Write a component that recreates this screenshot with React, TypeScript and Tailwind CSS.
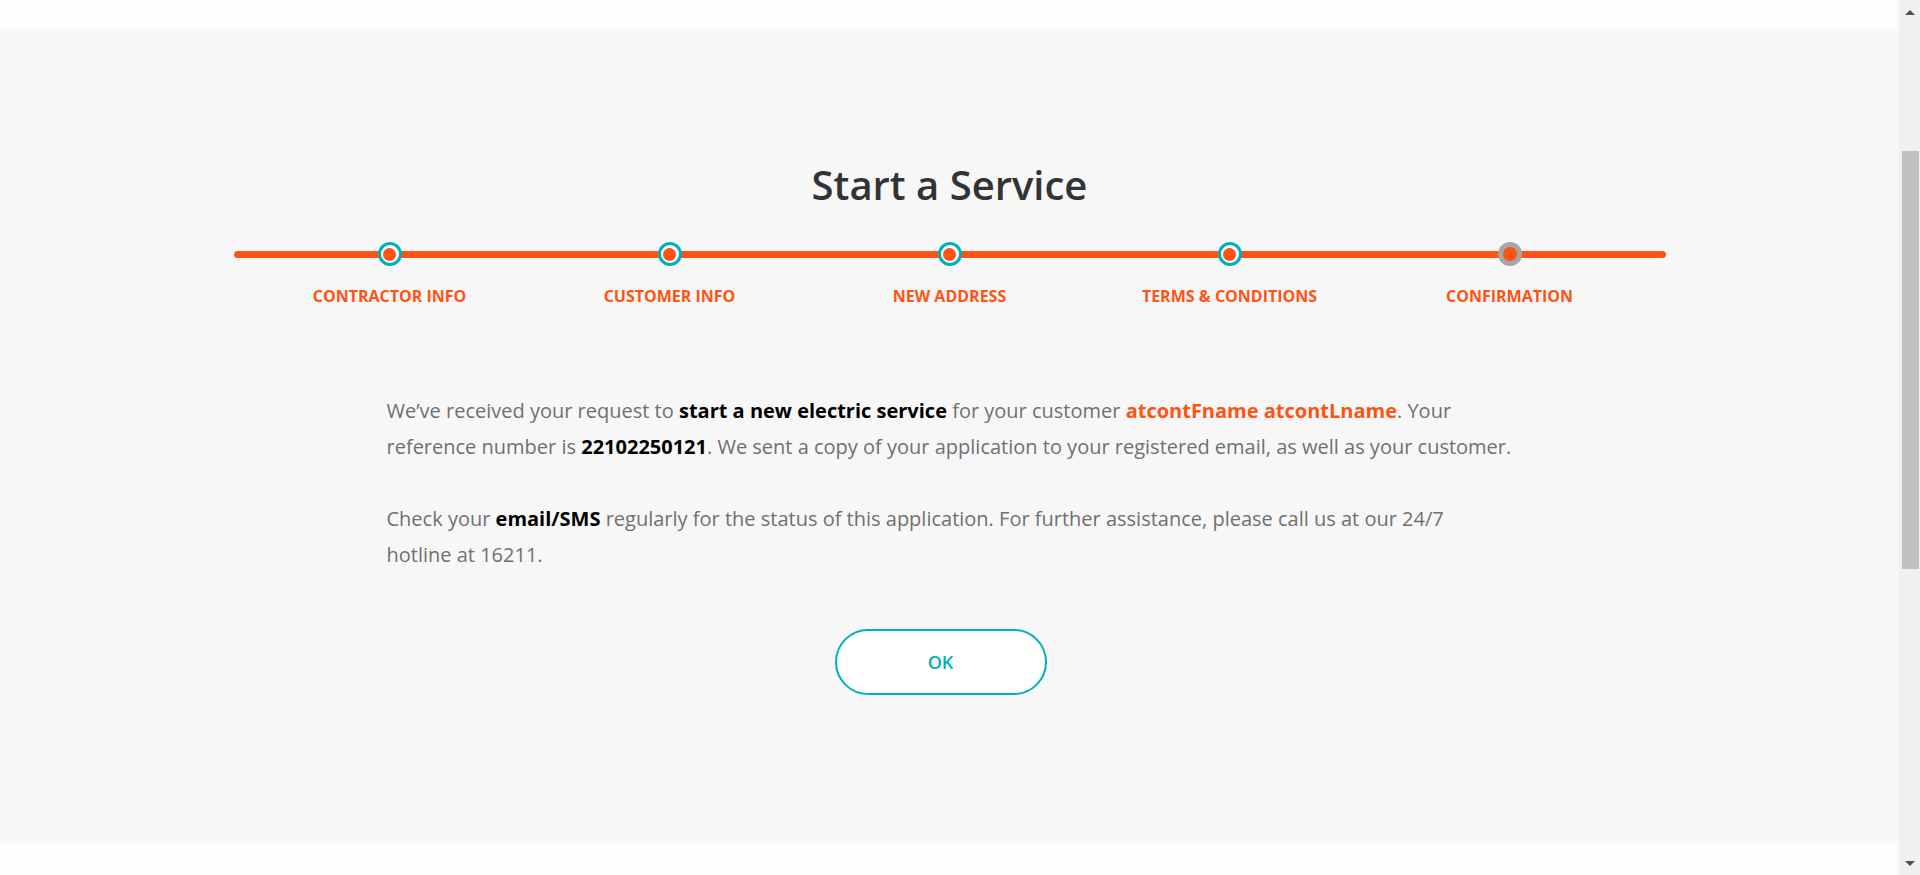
import React from "react";

const steps = [
    { label: "CONTRACTOR INFO", done: true },
    { label: "CUSTOMER INFO", done: true },
    { label: "NEW ADDRESS", done: true },
    { label: "TERMS & CONDITIONS", done: true },
    { label: "CONFIRMATION", done: false },
];

function StepDot({ done }: { done: boolean }) {
    if (done) {
        return (
            <div className="w-[24px] h-[24px] rounded-full border-[3px] border-[#00b1b9] bg-white flex items-center justify-center">
                <div className="w-[13px] h-[13px] rounded-full bg-[#ff5314]" />
            </div>
        );
    }
    return (
        <div className="w-[24px] h-[24px] rounded-full bg-[#a6a6a6] flex items-center justify-center">
            <div className="w-[14px] h-[14px] rounded-full bg-[#ff5314]" />
        </div>
    );
}

function Stepper() {
    return (
        <div className="relative w-[1432px] mx-auto">
            <div className="absolute left-0 right-0 top-[9px] h-[7px] rounded-full bg-[#ff5314]" />
            <div className="relative flex justify-center">
                {steps.map((s) => (
                    <div key={s.label} className="w-[280px] flex flex-col items-center">
                        <StepDot done={s.done} />
                        <div className="mt-[20px] text-[16px] leading-[20px] font-bold text-[#ff5314] whitespace-nowrap">
                            {s.label}
                        </div>
                    </div>
                ))}
            </div>
        </div>
    );
}

function Scrollbar() {
    return (
        <div className="w-[21px] h-[875px] bg-[#f0f0f0] flex flex-col items-center">
            <div className="h-[24px] flex items-center justify-center pl-[1px]">
                <div className="w-0 h-0 border-l-[5px] border-r-[5px] border-b-[5px] border-l-transparent border-r-transparent border-b-[#505050]" />
            </div>
            <div className="mt-[127px] w-[17px] h-[418px] bg-[#c1c1c1] ml-[2px]" />
            <div className="flex-1" />
            <div className="h-[24px] flex items-center justify-center pl-[1px]">
                <div className="w-0 h-0 border-l-[5px] border-r-[5px] border-t-[5px] border-l-transparent border-r-transparent border-t-[#505050]" />
            </div>
        </div>
    );
}

export default function App() {
    return (
        <div className="flex w-[1920px] h-[875px] overflow-hidden" style={{ fontFamily: '"Open Sans", "Noto Sans", sans-serif' }}>
            <div className="flex-1 flex flex-col">
                <div className="h-[31px] bg-[#fdfdfd]" />
                <div className="h-[810px] bg-[#f7f7f7] pt-[130px]">
                    <h1 className="text-center text-[40px] leading-[48px] font-semibold text-[#333333]">
                        Start a Service
                    </h1>
                    <div className="mt-[33px]">
                        <Stepper />
                    </div>
                    <div className="w-[1126px] mx-auto mt-[87px] text-[20px] leading-[36px] text-[#707070]">
                        <p>
                            We’ve received your request to <b className="font-bold text-black">start a new electric service</b> for
                            your customer <b className="font-bold text-[#ff5314]">atcontFname atcontLname</b>. Your reference number
                            is <b className="font-bold text-black">22102250121</b>. We sent a copy of your application to your
                            registered email, as well as your customer.
                        </p>
                        <p className="mt-[36px]">
                            Check your <b className="font-bold text-black">email/SMS</b> regularly for the status of this
                            application. For further assistance, please call us at our 24/7 hotline at 16211.
                        </p>
                    </div>
                    <div className="flex justify-center pr-[18px] mt-[56px]">
                        <button className="w-[212px] h-[66px] rounded-full border-2 border-[#00b1b9] bg-white text-[#00b1b9] text-[18px] font-semibold">
                            OK
                        </button>
                    </div>
                </div>
                <div className="flex-1 bg-[#fdfdfd]" />
            </div>
            <Scrollbar />
        </div>
    );
}
